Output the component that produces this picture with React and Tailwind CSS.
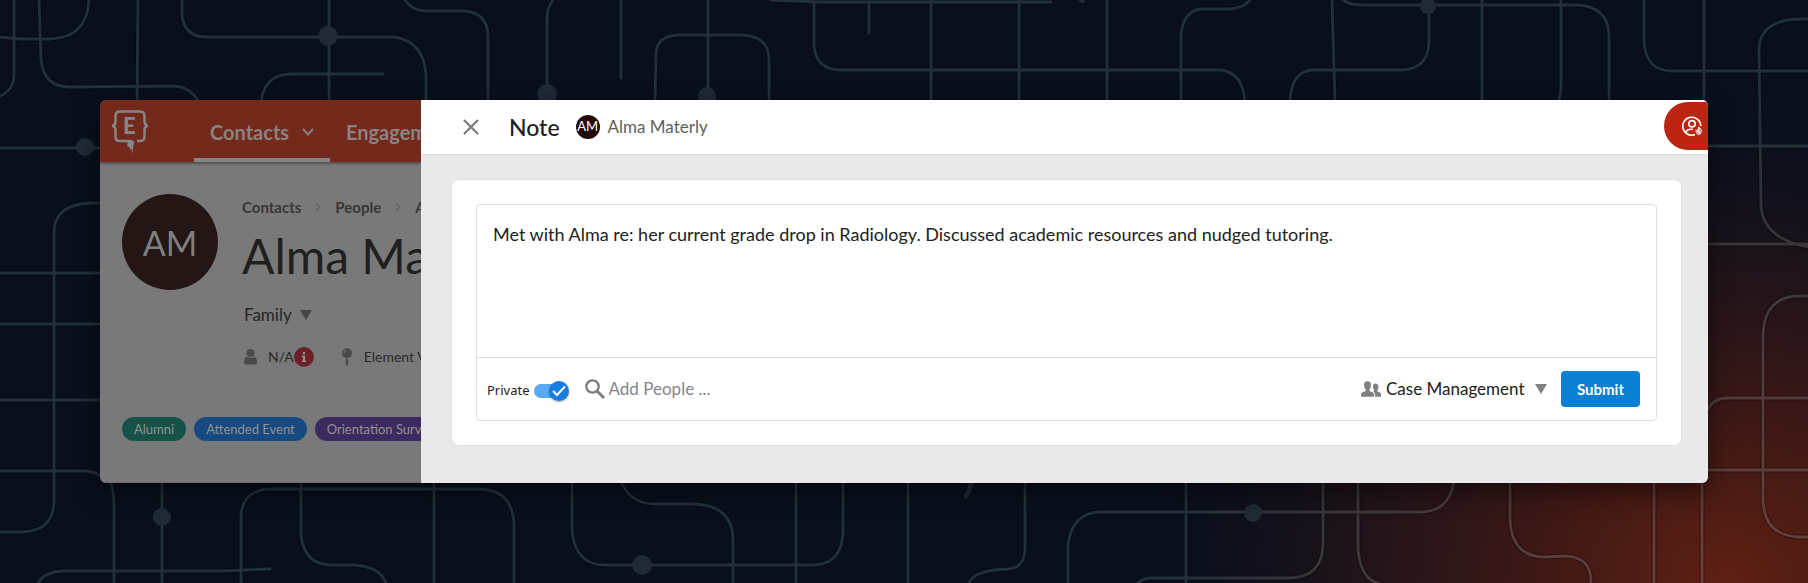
import React from "react";

const TRACES = [
  "M14 0V75Q14 90 0 96",
  "M39 0L41 60Q44 87 70 87L172 86Q190 86 199 102",
  "M0 37L20 39H50Q87 38 89 0",
  "M138 0L137 102",
  "M182 0V15Q184 36 205 37H395Q424 42 426 75V102",
  "M329 0V102",
  "M261 102Q264 75 290 74H383",
  "M405 0Q412 11 427 11H465Q487 13 488 35V102",
  "M553 0Q547 8 547 18V102",
  "M621 0V78",
  "M708 0V102",
  "M655 102L656 55Q656 35 680 35H742Q769 36 769 60V102",
  "M771 0L820 2H1051",
  "M814 2V47Q817 70 841 70H1220Q1243 72 1245 102",
  "M869 2V33",
  "M931 0V102",
  "M1019 0V102",
  "M1107 0V102",
  "M1181 102V35Q1183 12 1200 9H1230Q1244 8 1250 0",
  "M1332 0L1335 102",
  "M1343 0Q1350 5 1362 5H1578Q1608 7 1609 35V102",
  "M1429 10V42Q1428 70 1400 70H1312Q1291 72 1290 102",
  "M1482 0V102",
  "M1561 0V85Q1561 96 1558 102",
  "M1644 0V42Q1646 71 1672 71H1808",
  "M1704 0V102",
  "M1808 19H1800Q1759 20 1759 50L1761 205Q1762 238 1808 247",
  "M1700 146H1808",
  "M1700 244H1808",
  "M1808 296H1800Q1764 296 1763 335V500Q1764 536 1800 537H1808",
  "M1704 420Q1708 399 1726 398H1808",
  "M1700 470H1808",
  "M1025 480V550Q1024 568 1008 569Q974 570 969 583",
  "M1186 480V583",
  "M1068 583V545Q1072 512 1101 512H1420Q1450 512 1454 480",
  "M1323 480V545Q1322 577 1290 578H1152Q1143 578 1138 583",
  "M1358 480V550Q1361 579 1378 583",
  "M1510 480V520Q1512 557 1545 557L1565 556Q1592 557 1591 583",
  "M1654 480V583",
  "M1702 480V583",
  "M110 480Q114 490 114 505V583",
  "M162 480V583",
  "M241 583V515Q243 489 272 489H480Q513 490 514 525V583",
  "M301 480V535Q304 564 330 565H355Q380 567 386 583",
  "M434 480V583",
  "M38 583Q45 571 65 571H220L270 569",
  "M572 480V530Q575 565 605 565H815Q843 563 843 530V480",
  "M620 480Q630 504 655 504H695Q733 506 733 540V583",
  "M796 480V583",
  "M908 480V583",
  "M0 148H102",
  "M110 203H90Q54 205 54 232V500Q54 531 22 532H0",
  "M0 273H102",
  "M0 324H102",
  "M0 400H102",
  "M0 471H85Q97 471 108 482",
];

const NODES = [
  [328, 36, 10],
  [547, 94, 10],
  [707, 96, 9],
  [1428, 6, 8],
  [85, 147, 9],
  [162, 517, 9],
  [642, 565, 10],
  [1253, 513, 9],
];

function CircuitBackdrop() {
  return (
    <svg
      aria-hidden="true"
      className="absolute inset-0 h-full w-full"
      viewBox="0 0 1808 583"
      preserveAspectRatio="xMidYMid slice"
      fill="none"
    >
      <defs>
        <radialGradient id="glow" gradientUnits="userSpaceOnUse" cx="0" cy="0" r="1" gradientTransform="translate(1730 583) scale(580 480)">
          <stop offset="0" stopColor="#602013" />
          <stop offset="0.3" stopColor="#481a14" stopOpacity="0.9" />
          <stop offset="0.65" stopColor="#2a1518" stopOpacity="0.7" />
          <stop offset="1" stopColor="#14101c" stopOpacity="0" />
        </radialGradient>
        <radialGradient id="trace" gradientUnits="userSpaceOnUse" cx="0" cy="0" r="1" gradientTransform="translate(1730 583) scale(560 460)">
          <stop offset="0" stopColor="#6f4037" />
          <stop offset="0.5" stopColor="#4d3a39" />
          <stop offset="1" stopColor="#22303b" />
        </radialGradient>
      </defs>
      <rect width="1808" height="583" fill="#090f1d" />
      <rect width="1808" height="583" fill="url(#glow)" />
      <g stroke="#03060f" strokeOpacity="0.35" strokeWidth="5">
        {TRACES.map((d) => (
          <path key={d} d={d} />
        ))}
      </g>
      <g stroke="url(#trace)" strokeWidth="2.8" strokeLinecap="round">
        {TRACES.map((d) => (
          <path key={d} d={d} />
        ))}
      </g>
      {NODES.map(([x, y, r]) => (
        <circle key={x} cx={x} cy={y} r={r} fill="#1f2a35" />
      ))}
      <circle cx="1082" cy="0" r="3" fill="#1f2a35" />
      <path d="M971 480Q971 490 966 496" stroke="#1f2a35" strokeWidth="5" strokeLinecap="round" />
    </svg>
  );
}

function Logo() {
  return (
    <svg width="36" height="44" viewBox="0 0 36 44" fill="none" role="img" aria-label="Element" className="shrink-0">
      <g stroke="#868686" strokeWidth="2.5" strokeLinejoin="round">
        <path d="M20 31H7.5Q3.5 31 3.5 27V20Q3.5 16.8 0.5 15.8Q3.5 14.8 3.5 11.5V6Q3.5 1.5 8 1.5H28Q32.5 1.5 32.5 6V11.5Q32.5 14.8 35.5 15.8Q32.5 16.8 32.5 20V26.5Q32.5 31 28 31H25" />
      </g>
      <path d="M15.500 31V37H18L17.500 39H19.500L20 44L21.200 38L21.500 34.500H22V31Z" fill="#868686" />
      <text x="11" y="24" fill="#868686" fontSize="22" className="font-[Lato] font-black">E</text>
    </svg>
  );
}

function Triangle({ className }) {
  return (
    <svg width="12" height="10" viewBox="0 0 12 10" aria-hidden="true" className={className}>
      <path d="M0 0H12L6 10Z" fill="currentColor" />
    </svg>
  );
}

function CrumbArrow() {
  return (
    <svg width="6" height="8" viewBox="0 0 6 8" fill="none" stroke="#606060" strokeWidth="1.3" aria-hidden="true" className="shrink-0">
      <path d="M1 0.5L5 4L1 7.5" />
    </svg>
  );
}

function ContactPage() {
  return (
    <section className="flex w-[321px] shrink-0 flex-col overflow-hidden border-b border-[#6b6b6b] bg-[#797979] whitespace-nowrap">
      <header className="flex h-[62px] shrink-0 bg-[#732a1d] pl-3 text-xl font-bold text-[#8a8381] shadow-[0_1px_3px_rgba(0,0,0,0.5)]">
        <a href="#home" className="mr-[46px] pt-[10px]">
          <Logo />
        </a>
        <nav className="flex">
          <a href="#contacts" className="flex w-[136px] items-center justify-between border-b-4 border-[#868686] px-4 pt-[5px]">
            Contacts
            <svg width="12" height="8" viewBox="0 0 12 8" fill="none" stroke="currentColor" strokeWidth="2" aria-hidden="true">
              <path d="M1 1L6 6.500L11 1" />
            </svg>
          </a>
          <a href="#engagement" className="flex items-center border-b-4 border-transparent px-4 pt-[5px]">
            Engagement
          </a>
        </nav>
      </header>

      <div className="flex gap-6 pt-8 pl-[22px]">
        <div className="flex h-24 w-24 shrink-0 items-center justify-center rounded-full bg-[#231615] text-[34px] text-[#808080]">
          AM
        </div>
        <div className="flex flex-col items-start">
          <nav className="flex h-[26px] items-center gap-[14px] text-[15px] font-bold text-[#373737]">
            <a href="#contacts">Contacts</a>
            <CrumbArrow />
            <a href="#people">People</a>
            <CrumbArrow />
            <a href="#alma">Alma Materly</a>
          </nav>
          <h1 className="mt-[10px] text-[48px] leading-[52px] text-[#1f1f1f]">Alma Materly</h1>
          <div className="mt-[21px] flex items-center text-[#464646]">
            <select aria-label="Relation" className="appearance-none pr-5 pl-[2px] text-[17px] leading-6 text-[#262626]">
              <option>Family</option>
            </select>
            <Triangle className="pointer-events-none -ml-3" />
          </div>
          <div className="mt-[18px] flex h-6 items-center pl-[2px] text-sm text-[#292929]">
            <svg width="13" height="16" viewBox="0 0 13 16" fill="#4a4a4a" aria-hidden="true">
              <circle cx="6.500" cy="4" r="4" />
              <path d="M2.500 7.500Q6.500 10.500 10.500 7.500Q13 9.500 13 12.500V13.500Q13 15.500 10 15.500H3Q0 15.500 0 13.500V12.500Q0 9.500 2.500 7.500Z" />
            </svg>
            <span className="ml-[11px]">N/A</span>
            <svg width="20" height="20" viewBox="0 0 20 20" role="img" aria-label="Information">
              <circle cx="10" cy="10" r="10" fill="#6c212a" />
              <path d="M8.900 5H11.100V7.200H8.900ZM8 8.500H11.100V13.500H12V15H8V13.500H8.900V10H8Z" fill="#9a8d8e" />
            </svg>
            <svg width="10" height="18" viewBox="0 0 10 18" aria-hidden="true" className="ml-7">
              <circle cx="5" cy="5.200" r="5" fill="#4a4a4a" />
              <path d="M2 5.200Q2 2.500 4.500 2" stroke="#797979" strokeWidth="1" fill="none" />
              <path d="M3.800 11H6.200V17Q5 18.500 3.800 17Z" fill="#4a4a4a" />
            </svg>
            <span className="ml-3">Element View</span>
          </div>
        </div>
      </div>

      <ul className="mt-12 flex gap-2 pl-[22px] text-[13px] leading-6 text-[#929292]">
        <li className="rounded-full bg-[#155348] px-3">Alumni</li>
        <li className="rounded-full bg-[#174a80] px-3">Attended Event</li>
        <li className="rounded-full bg-[#3c2a60] px-3">Orientation Survey</li>
      </ul>
    </section>
  );
}

function NotePanel() {
  return (
    <main className="flex min-w-0 flex-1 flex-col bg-[#e9e9e9]">
      <header className="flex h-[55px] items-center border-b border-[#dcdcdc] bg-white pl-[42px]">
        <button type="button" aria-label="Close" className="text-[#7b7b7b]">
          <svg width="16" height="16" viewBox="0 0 16 16" fill="none" stroke="currentColor" strokeWidth="2.2" aria-hidden="true">
            <path d="M1 1L15 15M15 1L1 15" />
          </svg>
        </button>
        <h2 className="ml-[30px] text-[23px] font-medium text-[#202020]">Note</h2>
        <div className="ml-4 flex h-6 w-6 items-center justify-center rounded-full bg-[#240b05] text-[13px] text-white">
          AM
        </div>
        <span className="ml-2 flex-1 text-[17px] text-[#606060]">Alma Materly</span>
        <button type="button" aria-label="Account" className="mb-0.5 flex h-12 w-11 items-center rounded-l-full bg-[#bb2512] pl-[18px]">
          <svg width="21" height="20" viewBox="0 0 21 20" fill="none" stroke="#fff" strokeWidth="1.6" aria-hidden="true">
            <path d="M13 18.600A9 9 0 1 1 18.800 10" />
            <circle cx="10" cy="7.800" r="3.200" />
            <path d="M3.800 16Q5.500 13.300 9 13.300H11" />
            <path d="M16.300 10.200L18.800 12.500L20.300 14.500L18.800 18L16.500 19.300L14 17L13.300 14.300L15.300 14Z" fill="#f4dcd9" stroke="none" />
            <path d="M14.500 15.500L17 18M17.500 13L18.500 16" stroke="#bb2512" strokeWidth="0.6" />
          </svg>
        </button>
      </header>

      <div className="flex flex-1 flex-col pt-6 pr-[26px] pb-[37px] pl-[30px]">
        <div className="flex flex-1 rounded-lg border border-[#e0e0e0] bg-white px-6 py-6">
          <form className="flex flex-1 flex-col rounded border border-[#dedede]" onSubmit={(e) => e.preventDefault()}>
            <textarea
              aria-label="Note text"
              className="h-[153px] resize-none border-b border-[#dedede] px-4 pt-[17px] text-lg leading-6 text-[#222] outline-none"
              defaultValue="Met with Alma re: her current grade drop in Radiology. Discussed academic resources and nudged tutoring."
            />
            <div className="flex flex-1 items-center pr-4 pl-[10px]">
              <label className="flex items-center gap-1 pt-1 font-['Noto_Sans'] text-[13px] text-[#222]">
                Private
                <span className="grid h-5 w-[35px] items-center">
                  <input
                    type="checkbox"
                    defaultChecked
                    className="peer col-start-1 row-start-1 h-[14px] w-[34px] appearance-none rounded-full bg-gray-300 checked:bg-[#5aaaf3]"
                  />
                  <span className="pointer-events-none col-start-1 row-start-1 flex h-5 w-5 items-center justify-center rounded-full bg-gray-500 shadow-[0_1px_2px_rgba(0,0,0,0.35)] peer-checked:justify-self-end peer-checked:bg-[#1a7be0]">
                    <svg width="14" height="12" viewBox="0 0 14 12" fill="none" stroke="#fff" strokeWidth="2" aria-hidden="true">
                      <path d="M1 6L5 10L13 1.500" />
                    </svg>
                  </span>
                </span>
              </label>
              <label className="ml-4 flex flex-1 items-center gap-1 text-[#7c7c7c]">
                <svg width="20" height="20" viewBox="0 0 20 20" fill="none" stroke="currentColor" aria-hidden="true" className="shrink-0">
                  <circle cx="7.500" cy="7.500" r="6.200" strokeWidth="2.300" />
                  <path d="M12 12L19 19" strokeWidth="2.800" />
                </svg>
                <input
                  type="text"
                  aria-label="Add people"
                  placeholder="Add People ..."
                  className="w-full min-w-0 text-[17px] leading-6 outline-none placeholder:text-[#858585]"
                />
              </label>
              <div className="flex items-center text-[#808080]">
                <svg width="20" height="16" viewBox="0 0 20 16" fill="currentColor" aria-hidden="true">
                  <path d="M3 4Q3 0.300 6.500 0.300T10 4Q10 7 8.500 8.300V10L12 11.500Q13 12 13 13.500V15.800H0V13.500Q0 12 1 11.500L4.700 10V8.300Q3 7 3 4Z" />
                  <path d="M12 5.500Q12 2.500 14.500 2.500T17.500 5.500Q17.500 8 16.300 9.200V10.500L19 11.600Q20 12 20 13.300V15.800H14V13.500Q14 11.500 12.500 10.800L13 9.200Q12 8 12 5.500Z" />
                </svg>
                <select aria-label="Category" className="ml-[5px] appearance-none pr-[22px] text-[17px] leading-6 text-[#222] outline-none">
                  <option>Case Management</option>
                </select>
                <Triangle className="pointer-events-none -ml-3" />
              </div>
              <button type="submit" className="ml-[14px] h-9 w-[79px] rounded bg-[#0a80d3] text-[15px] font-bold text-white">
                Submit
              </button>
            </div>
          </form>
        </div>
      </div>
    </main>
  );
}

export default function App() {
  return (
    <div className="relative min-h-screen overflow-hidden bg-[#090f1d] p-[100px] font-[Lato,sans-serif]">
      <CircuitBackdrop />
      <div className="relative flex min-h-[383px] overflow-hidden rounded-md shadow-[0_8px_24px_rgba(0,0,0,0.5)]">
        <ContactPage />
        <NotePanel />
      </div>
    </div>
  );
}
